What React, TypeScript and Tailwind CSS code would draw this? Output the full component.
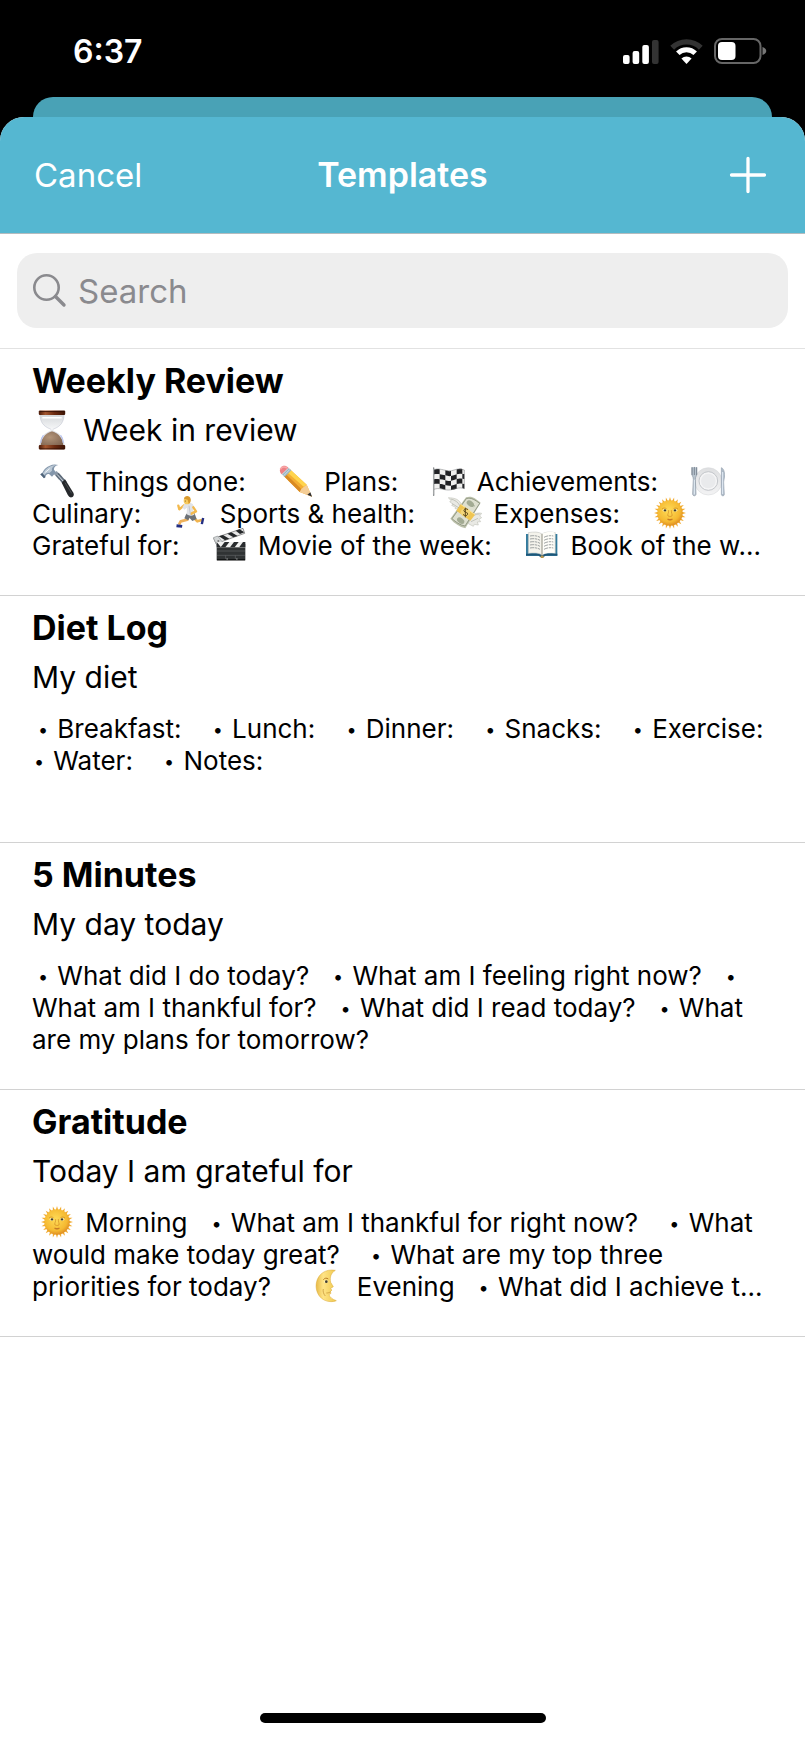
import { Fragment, type ReactNode } from "react";

type IconName =
  | "hourglass"
  | "hammer"
  | "pencil"
  | "flag"
  | "plate"
  | "runner"
  | "money"
  | "sun"
  | "clapper"
  | "book"
  | "moon";

const sunRays = Array.from({ length: 24 }, (_, i) => {
  const a = (i * Math.PI) / 12;
  const w = 0.1;
  const p = (r: number, t: number) =>
    `${(51 + r * Math.cos(t)).toFixed(1)},${(51 + r * Math.sin(t)).toFixed(1)}`;
  return `M${p(36, a - w)}L${p(48, a)}L${p(36, a + w)}Z`;
}).join("");

const drawings: Record<IconName, ReactNode> = {
  hourglass: (
    <>
      <defs>
        <linearGradient id="hg-wood" x1="0" x2="1">
          <stop offset="0" stopColor="#4a1a08" />
          <stop offset=".25" stopColor="#a3562f" />
          <stop offset=".6" stopColor="#6b2a10" />
          <stop offset="1" stopColor="#3c1405" />
        </linearGradient>
        <linearGradient id="hg-glass" x1="0" x2="0" y1="0" y2="1">
          <stop offset="0" stopColor="#d3d6d9" />
          <stop offset=".5" stopColor="#f8f9fa" />
          <stop offset="1" stopColor="#dfe2e6" />
        </linearGradient>
        <radialGradient id="hg-sand" cx=".4" cy=".4" r=".7">
          <stop offset="0" stopColor="#b3957a" />
          <stop offset="1" stopColor="#806450" />
        </radialGradient>
      </defs>
      <path d="M20 10h62c0 20-8 32-27 39-3 2-3 4 0 6 19 7 27 20 27 39H20c0-19 8-32 27-39 3-2 3-4 0-6C28 42 20 30 20 10Z" fill="url(#hg-glass)" stroke="#c2c7d2" strokeWidth="1.5" />
      <path d="M51 55c19 6 29 20 29 38H22c0-18 10-32 29-38Z" fill="url(#hg-sand)" />
      <path d="M29 65c-5 6-7 12-7 20M73 65c5 6 7 12 7 20" stroke="#b8c3f0" strokeWidth="3" fill="none" />
      <path d="M26 20h50" stroke="#fff" strokeWidth="4" />
      <rect x="17" y="1" width="68" height="12" rx="3" fill="url(#hg-wood)" />
      <path d="M20 4h62" stroke="#2d0c02" strokeWidth="2" />
      <rect x="17" y="90" width="68" height="12" rx="3" fill="url(#hg-wood)" />
      <path d="M20 100h62" stroke="#2d0c02" strokeWidth="2" />
    </>
  ),
  hammer: (
    <>
      <path d="m41 29 9-8 16 17-9 9Z" fill="#8c98a6" />
      <path d="m47 34 9-8 24 27-9 10Z" fill="#5e6b79" />
      <path d="m51 31 25 27" stroke="#dde4ea" strokeWidth="3" />
      <path d="m65 56 10-10 25 40c3 6 1 12-5 14-5 1-9-3-12-8Z" fill="#25282b" />
      <path d="m75 56 20 32" stroke="#5c6165" strokeWidth="2" />
      <path d="M1 31c8-3 8-12 16-18C27 4 40-2 55 3c-9 2-14 7-13 14l6 8-12 13-9-8c-8-1-9 5-15 13Z" fill="#8396ab" />
      <path d="M3 32c9-4 9-12 17-18C29 7 39 3 49 3 38 7 34 13 36 20l-8 7c-8-2-12 3-17 10Z" fill="#bdcad6" />
      <path d="m1 31 11 12 5-4L7 27Z" fill="#50647a" />
      <path d="M16 25 29 14" stroke="#f2f6fa" strokeWidth="3" />
    </>
  ),
  pencil: (
    <>
      <path d="M31 14 83 62l16 36-37-14L12 34Z" fill="#f4ad31" />
      <path d="m31 14 52 48-9 6-54-47Z" fill="#ffd44c" />
      <path d="m18 28 52 50-8 6-50-50Z" fill="#d98a22" />
      <path d="M83 62 99 98 62 84l5-9 7-6Z" fill="#f4cd96" />
      <path d="m94 85 5 13-14-6Z" fill="#303136" />
      <path d="M8 31 28 11l9 8-20 20Z" fill="#9ab3c2" />
      <path d="m13 36 20-20M9 31l20-19" stroke="#dce8ed" strokeWidth="2.5" />
      <path d="M8 31C-6 19 10-6 28 11Z" fill="#ed8085" />
      <path d="M4 16C9 8 17 7 24 12" stroke="#f8a8a8" strokeWidth="5" fill="none" />
    </>
  ),
  flag: (
    <>
      <path d="M5 17C26 9 45 27 66 18c11-4 20-4 31 0v56c-18-7-29 4-48 4-16 0-27-8-44-2Z" fill="#f0f0ef" />
      <g fill="#202124">
        <path d="M6 17c6-2 11-2 17-1v15c-6-2-11-1-17 0ZM40 19c6 2 11 3 17 2v15c-6 1-11 0-17-2ZM74 16c6-2 11-2 17-1v15c-6-1-11-1-17 1Z" />
        <path d="M23 31c6 1 11 2 17 3v15c-6-2-11-3-17-3ZM57 36c6-1 11-3 17-5v14c-6 2-11 4-17 5ZM91 30h6v15l-6-1Z" />
        <path d="M6 46c6-2 11-1 17 0v14c-6-1-11-1-17 0ZM40 49c6 2 11 2 17 1v15c-6 1-11 0-17-2ZM74 45c6-2 11-2 17-1v15c-6-1-11-1-17 1Z" />
        <path d="M23 60c6 0 11 2 17 3v14c-6-1-11-3-17-4ZM57 65c6-1 11-3 17-5v14c-6 2-11 3-17 4ZM91 59l6 1v14l-6-2Z" />
      </g>
      <path d="M5 12v82" stroke="#7f8284" strokeWidth="4" strokeLinecap="round" />
      <path d="M4 14v78" stroke="#d5d7d8" strokeWidth="1.5" />
      <path d="M6 17C26 9 45 27 66 18c11-4 20-4 31 0v56c-18-7-29 4-48 4-16 0-27-8-43-2" fill="none" stroke="#77797b" strokeWidth="1.5" />
    </>
  ),
  plate: (
    <>
      <defs>
        <linearGradient id="pl-rim" x1="0" x2="0" y1="0" y2="1">
          <stop offset="0" stopColor="#dedfe1" />
          <stop offset="1" stopColor="#f3f3f4" />
        </linearGradient>
      </defs>
      <circle cx="52" cy="52" r="41" fill="url(#pl-rim)" stroke="#d2d4d7" strokeWidth="1.5" />
      <circle cx="52" cy="51" r="28" fill="#f5f5f6" stroke="#c3c6ca" strokeWidth="3" />
      <circle cx="52" cy="51" r="22" fill="#e9eaec" />
      <path d="M3 10v19c0 8 4 9 4 17L5 90c0 7 10 7 10 0l-2-44c0-8 4-9 4-17V10" fill="#bac5cf" stroke="#8793a0" strokeWidth="2" />
      <path d="M3 11v21M10 10v22M17 11v21" stroke="#7c8793" strokeWidth="3" strokeLinecap="round" />
      <path d="M10 47v44" stroke="#e3edf6" strokeWidth="3" />
      <path d="M91 11c7 2 10 13 10 25l-3 18 2 37c0 6-9 6-9 0Z" fill="#aebbc8" stroke="#8490a0" strokeWidth="1.5" />
      <path d="M95 24v66" stroke="#e5eef7" strokeWidth="3" />
    </>
  ),
  runner: (
    <>
      <path d="m48 54-8 17-20 5-5 10" fill="none" stroke="#eeb15b" strokeWidth="8" strokeLinejoin="round" />
      <path d="m56 62 14 14 14-4" fill="none" stroke="#f0b450" strokeWidth="8" strokeLinejoin="round" />
      <path d="m37 53 24-3 7 19-13 6-9-10-3 8-12-6Z" fill="#6d7278" />
      <path d="M30 28 16 40l-3-11" fill="none" stroke="#f3b94d" strokeWidth="7" strokeLinecap="round" strokeLinejoin="round" />
      <path d="M32 23c8-5 16-4 24 1l6 11-5 5 4 16c-8 5-16 4-23-1l1-20-8 6-6-7Z" fill="#e1e3e7" />
      <path d="m58 34 8 12-14 7" fill="none" stroke="#f3b94d" strokeWidth="7" strokeLinecap="round" strokeLinejoin="round" />
      <path d="m45 29 4 26" stroke="#c3c7cc" strokeWidth="3" />
      <ellipse cx="39" cy="14" rx="10" ry="11" fill="#f7ca5d" />
      <path d="M30 8C31-3 49-2 50 9c1 7-2 12-6 14l-3-12Z" fill="#d9992c" />
      <circle cx="34" cy="15" r="1.5" fill="#60461f" />
      <path d="m8 85 17 2-1 8-17-1ZM84 65l7 2-4 18-7-1Z" fill="#232f83" />
    </>
  ),
  money: (
    <>
      <path d="M41 30C37 10 21 6 1 5l9 10-5 2 10 8-4 3 12 6-2 4 16 2ZM67 59c18-11 34-7 34-7l-6 8 6 5-8 5 5 7-10 1 3 9-12-2-3 6-15-8Z" fill="#e9e9e4" stroke="#c4c5bd" strokeWidth="2" />
      <path d="M8 9c14 3 23 10 29 23M13 23l20 13M95 54c-14 0-23 6-31 18M90 67l-21 10" stroke="#adb0a6" strokeWidth="2" fill="none" />
      <path d="M54 4C72-2 83 8 98 20L52 97C34 92 20 83 7 68Z" fill="#bdc2ac" />
      <path d="M55 8c15-5 27 5 40 14L51 90C35 87 24 78 12 68Z" fill="#dee0d0" stroke="#777f6b" strokeWidth="2" />
      <path d="m31 35 36 29M62 24l14 8M31 73l15 8M60 16l20 14" stroke="#8b937d" strokeWidth="3" />
      <ellipse cx="67" cy="23" rx="12" ry="8" fill="#a3ab93" transform="rotate(35 67 23)" />
      <ellipse cx="38" cy="74" rx="12" ry="8" fill="#a3ab93" transform="rotate(35 38 74)" />
      <path d="m38 25 43 31-14 18-42-30Z" fill="#efc552" />
      <path d="m38 25 43 31" stroke="#ffe18a" strokeWidth="3" />
      <ellipse cx="52" cy="49" rx="14" ry="12" fill="#f3d577" />
      <path d="M60 41c-5-5-14-2-12 4 2 6 13 3 11 10-1 5-11 5-14 0M52 35v29" fill="none" stroke="#5c481c" strokeWidth="3" />
    </>
  ),
  sun: (
    <>
      <defs>
        <radialGradient id="sun-face" cx=".45" cy=".4" r=".6">
          <stop offset="0" stopColor="#ffdc58" />
          <stop offset=".75" stopColor="#f5b931" />
          <stop offset="1" stopColor="#df8e22" />
        </radialGradient>
      </defs>
      <path d={sunRays} fill="#f1aa2d" />
      <circle cx="51" cy="51" r="38" fill="url(#sun-face)" />
      <path d="M27 39c4-4 10-4 14 0M61 39c4-4 10-4 14 0" stroke="#c98a24" strokeWidth="2" fill="none" />
      <ellipse cx="35" cy="43" rx="6" ry="4" fill="#fff2b0" />
      <ellipse cx="67" cy="43" rx="6" ry="4" fill="#fff2b0" />
      <circle cx="36" cy="43" r="3.500" fill="#3f3a2a" />
      <circle cx="66" cy="43" r="3.500" fill="#3f3a2a" />
      <path d="M47 42c1 9-5 14-2 18 3 2 5 0 6 2 1-2 4 0 6-2 2-4-3-9-2-18" stroke="#d08b24" strokeWidth="2" fill="none" />
      <path d="M42 69c5-2 7 0 9 0s4-2 9 0c-5 6-13 6-18 0Z" fill="#c67a25" />
    </>
  ),
  clapper: (
    <>
      <path d="m2 31 88-30 5 15L9 47Z" fill="#e9e9e9" stroke="#333" strokeWidth="1.5" />
      <path d="m18 25 12-4 19 11-13 5ZM43 17l12-4 19 11-13 4ZM68 8l12-4 14 9-13 5Z" fill="#25282a" />
      <path d="m1 29 13-5 15 19 1 18-18-8Z" fill="#d2d5d6" stroke="#939799" strokeWidth="2" />
      <circle cx="16" cy="39" r="3" fill="#777" />
      <path d="M11 48h86v49H11Z" fill="#303334" />
      <path d="M11 42h86v16H11Z" fill="#f0f0ef" />
      <path d="m11 42 13 16H11ZM35 42h14l-12 16H23ZM63 42h14L65 58H51ZM90 42h7v15H79Z" fill="#292c2e" />
      <path d="M12 69h84M12 82h84M38 82v14M67 82v14" stroke="#606466" strokeWidth="2" />
      <path d="M12 95h84" stroke="#121414" strokeWidth="4" />
      <path d="M40 93h5M69 93h5" stroke="#d1d3d4" strokeWidth="2" />
    </>
  ),
  book: (
    <>
      <path d="M3 18h94v66H60c-5 5-13 5-18 0H3Z" fill="#347b9d" />
      <path d="M3 80h37l11 5 11-5h35" fill="none" stroke="#1d5577" strokeWidth="5" />
      <path d="M10 14c16-3 32-3 41 4 9-7 25-7 40-4v62c-16-2-31-2-40 5-9-7-25-7-41-5Z" fill="#f4f3ec" stroke="#b9bbb8" strokeWidth="1.5" />
      <path d="M51 18c9-6 24-7 37-5v62c-13-2-28-1-37 6Z" fill="#fffef9" />
      <path d="M51 18v64" stroke="#aaa89c" strokeWidth="4" />
      <g stroke="#8d9193" strokeWidth="2.500" fill="none">
        <path d="M15 24c10-2 22-1 30 4M15 33c10-2 22-1 30 4M15 42c10-2 22-1 30 4M15 51c10-2 22-1 30 4M15 60c10-2 22-1 30 4M57 28c8-5 20-6 28-4M57 37c8-5 20-6 28-4M57 46c8-5 20-6 28-4M57 55c8-5 20-6 28-4M57 64c8-5 20-6 28-4" strokeDasharray="13 2 7 2" />
      </g>
      <path d="M47 83h9v7h-9Z" fill="#b8944a" />
    </>
  ),
  moon: (
    <>
      <defs>
        <linearGradient id="moon-face" x1="0" x2="1">
          <stop offset="0" stopColor="#e7ba48" />
          <stop offset=".35" stopColor="#ffe486" />
          <stop offset="1" stopColor="#efc84d" />
        </linearGradient>
      </defs>
      <path d="M70 4C42-1 18 14 13 42c-5 29 14 56 44 56 6 0 12-1 16-3-12-4-20-11-22-18l6-4-2-5 5-5-5-4 9-6-8-13c-3-15 0-27 14-36Z" fill="url(#moon-face)" stroke="#dba936" strokeWidth="1.5" />
      <path d="M34 32c4-5 10-6 15-2" stroke="#b67b25" strokeWidth="3" fill="none" />
      <ellipse cx="42" cy="38" rx="6" ry="4" fill="#fff5bc" />
      <circle cx="43" cy="38" r="4" fill="#413b2e" />
      <path d="M43 72c5 0 9-1 13-4M34 60c-2 7 1 16 6 21" stroke="#bd8a2d" strokeWidth="2" fill="none" />
    </>
  ),
};

function Icon({ name }: { name: IconName }) {
  return (
    <svg
      viewBox="0 0 102 102"
      aria-hidden="true"
      className="-my-2 mx-1 inline-block size-[34px] align-[1px]"
    >
      {drawings[name]}
    </svg>
  );
}

/** Splits a run of text so that each list bullet gets its own small, fixed-width glyph. */
function Run({ text }: { text: string }) {
  return text.split("•").map((piece, n) => (
    <Fragment key={n}>
      {n > 0 && (
        <span className="inline-block w-[14px] text-center align-[2px] text-[18px] leading-5">•</span>
      )}
      {piece}
    </Fragment>
  ));
}

type Part = string | { icon: IconName };
const i = (icon: IconName): Part => ({ icon });

interface Template {
  title: string;
  heading: ReactNode;
  lines: Part[][];
}

const templates: Template[] = [
  {
    title: "Weekly Review",
    heading: (
      <>
        <svg viewBox="0 0 102 103" aria-hidden="true" className="-my-2 mr-[11px] inline-block size-10 align-[-1px]">
          {drawings.hourglass}
        </svg>
        Week in review
      </>
    ),
    lines: [
      [i("hammer"), " Things done:    ", i("pencil"), " Plans:    ", i("flag"), " Achievements:    ", i("plate")],
      ["Culinary:    ", i("runner"), " Sports & health:    ", i("money"), " Expenses:    ", i("sun")],
      ["Grateful for:    ", i("clapper"), " Movie of the week:    ", i("book"), " Book of the w..."],
    ],
  },
  {
    title: "Diet Log",
    heading: "My diet",
    lines: [
      ["• Breakfast:    • Lunch:    • Dinner:    • Snacks:    • Exercise:"],
      ["• Water:    • Notes:"],
    ],
  },
  {
    title: "5 Minutes",
    heading: "My day today",
    lines: [
      ["• What did I do today?   • What am I feeling right now?   •"],
      ["What am I thankful for?   • What did I read today?   • What"],
      ["are my plans for tomorrow?"],
    ],
  },
  {
    title: "Gratitude",
    heading: "Today I am grateful for",
    lines: [
      [i("sun"), " Morning   • What am I thankful for right now?    • What"],
      ["would make today great?    • What are my top three"],
      ["priorities for today?     ", i("moon"), " Evening   • What did I achieve t..."],
    ],
  },
];

function StatusBar() {
  return (
    <div className="flex h-[97px] items-start justify-between pt-8 pr-[38px] pl-[73px] text-white">
      <time className="text-[32px] leading-10 font-semibold">6:37</time>
      <div className="flex h-[38px] items-center gap-[11px]">
        <svg width="36" height="25" viewBox="0 0 36 25" role="img" aria-label="Signal strength">
          <rect x="0" y="16" width="6.600" height="9" rx="2" fill="#fff" />
          <rect x="9.600" y="12" width="6.600" height="13" rx="2" fill="#fff" />
          <rect x="19.300" y="6" width="6.600" height="19" rx="2" fill="#fff" />
          <rect x="29" y="1" width="6.600" height="24" rx="2" fill="#333" />
        </svg>
        <svg width="33" height="25" viewBox="0 0 33 25" role="img" aria-label="Wi-Fi">
          <path d="M2.200 8.700a20.400 20.400 0 0 1 28.600 0" fill="none" stroke="#333" strokeWidth="5.400" />
          <path d="M7.800 14.200a12.500 12.500 0 0 1 17.400 0" fill="none" stroke="#fff" strokeWidth="5" />
          <path d="M11.400 19.600a7.500 7.500 0 0 1 10.200 0L16.500 25Z" fill="#fff" />
        </svg>
        <svg width="53" height="26" viewBox="0 0 53 26" role="img" aria-label="Battery">
          <rect x="1" y="1" width="45.500" height="24" rx="7" fill="none" stroke="#666" strokeWidth="2" />
          <rect x="4" y="4" width="17.500" height="18" rx="4" fill="#fff" />
          <path d="M48.500 9c5 1.500 5 6.500 0 8Z" fill="#777" />
        </svg>
      </div>
    </div>
  );
}

export default function App() {
  return (
    <div className="flex min-h-screen flex-col bg-black font-['Inter','Liberation_Sans',sans-serif] text-black">
      <StatusBar />
      <div className="mx-[33px] h-5 rounded-t-[20px] bg-[#49a2b6]" />
      <div className="flex flex-1 flex-col overflow-hidden rounded-t-[24px] bg-white">
        <header className="grid h-[117px] grid-cols-3 items-center border-b border-[#b4bcbf] bg-[#55b7d1] px-[34px] leading-10 text-white">
          <button type="button" className="justify-self-start text-[33px]">
            Cancel
          </button>
          <h1 className="justify-self-center text-[34px] font-semibold">Templates</h1>
          <button type="button" aria-label="Add template" className="justify-self-end">
            <svg width="43" height="40" viewBox="0 0 43 40" aria-hidden="true">
              <path d="M20 3.500v33M3.500 20h33" stroke="#fff" strokeWidth="3.300" strokeLinecap="round" />
            </svg>
          </button>
        </header>

        <div className="border-b border-[#e2e2e2] px-[17px] pt-[19px] pb-5">
          <div className="flex h-[75px] items-center gap-[11px] rounded-[20px] bg-[#eee] px-4">
            <svg width="34" height="34" viewBox="0 0 34 34" aria-hidden="true" fill="none" stroke="#8a8a8e">
              <circle cx="13.500" cy="13.500" r="12.200" strokeWidth="2.600" />
              <path d="m22.500 22.500 8.500 8.500" strokeWidth="3.400" strokeLinecap="round" />
            </svg>
            <input
              type="search"
              aria-label="Search"
              placeholder="Search"
              className="h-12 min-w-0 flex-1 bg-transparent text-[33px] leading-10 outline-none placeholder:text-[#8a8a8e]"
            />
          </div>
        </div>

        <ul>
          {templates.map((t) => (
            <li key={t.title} className="h-[247px] overflow-hidden border-b border-[#d2d2d2] px-8 pt-3">
              <h2 className="text-[34px] leading-10 font-bold">{t.title}</h2>
              <p className="mt-[9px] h-10 text-[30px] leading-10 whitespace-nowrap">{t.heading}</p>
              <div className="mt-4 text-[26px] leading-8 whitespace-pre">
                {t.lines.map((line, n) => (
                  <p key={n} className="h-8 first:pl-1">
                    {line.map((part, k) =>
                      typeof part === "string" ? <Run key={k} text={part} /> : <Icon key={k} name={part.icon} />,
                    )}
                  </p>
                ))}
              </div>
            </li>
          ))}
        </ul>

        <div className="mx-auto mt-auto mb-[18px] h-[10px] w-[286px] rounded-full bg-black" />
      </div>
    </div>
  );
}
